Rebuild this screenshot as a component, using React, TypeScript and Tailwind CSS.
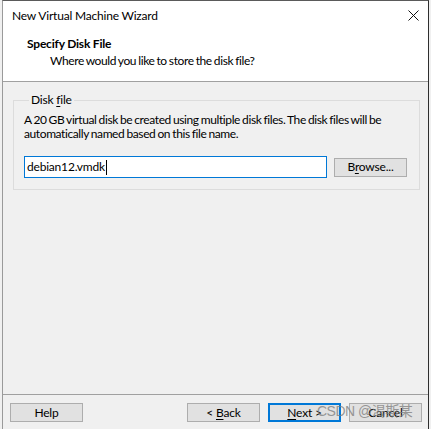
const font = { fontFamily: 'Lato, "Liberation Sans", sans-serif' }

function WinButton({
  label,
  accel,
  rest,
  focused = false,
}: {
  label?: string
  accel?: string
  rest?: string
  focused?: boolean
}) {
  return (
    <button
      className={`flex h-[19px] w-[73px] items-center justify-center bg-[#e1e1e1] text-[12px] leading-none tracking-[-0.2px] text-black ${
        focused ? 'border-2 border-[#0078d7]' : 'border border-[#adadad]'
      }`}
    >
      <span className="whitespace-pre">
        {label}
        {accel && <span className="underline underline-offset-2">{accel}</span>}
        {rest}
      </span>
    </button>
  )
}

export default function App() {
  return (
    <div
      className="relative h-[429px] w-[431px] overflow-hidden bg-[#f0f0f0] tracking-[-0.2px]"
      style={font}
    >
      <div className="ml-[2px] flex h-full w-[427px] flex-col border-l border-r border-t border-l-[#9a9a9a] border-r-[#2e2e2e] border-t-[#5a5a5a] bg-[#f0f0f0]">
        {/* header */}
        <div className="border-b border-[#a0a0a0] bg-white">
          <div className="flex h-[29px] items-center justify-between pl-[9px] pr-[9px]">
            <span className="text-[12px] text-black">New Virtual Machine Wizard</span>
            <svg width="11" height="11" viewBox="0 0 11 11" className="mt-[-1px]">
              <path d="M0.5 0.5L10.5 10.5M10.5 0.5L0.5 10.5" stroke="#111" strokeWidth="1" />
            </svg>
          </div>
          <div className="pb-[12px] pl-[24px] pt-[6px]">
            <div className="text-[12px] font-bold leading-[16px] text-black">Specify Disk File</div>
            <div className="mt-[1px] pl-[23px] text-[12px] leading-[16px] tracking-[-0.4px] text-black [word-spacing:-0.6px]">
              Where would you like to store the disk file?
            </div>
          </div>
        </div>

        {/* body */}
        <div className="flex-1 pl-[10px] pr-[8px] pt-[10px]">
          <fieldset className="border border-[#dcdcdc] pb-[11px] pl-[10px] pr-[10px]">
            <legend className="ml-[5px] px-[2px] text-[12px] leading-[16px] text-black">
              Disk <span className="underline underline-offset-2">f</span>ile
            </legend>
            <p className="pt-[5px] text-[12px] leading-[14px] tracking-[-0.4px] text-black [word-spacing:-0.6px]">
              A 20 GB virtual disk be created using multiple disk files. The disk files will be
              <br />
              automatically named based on this file name.
            </p>
            <div className="mt-[15px] flex items-center gap-[7px]">
              <div className="flex h-[22px] w-[303px] items-center border border-[#0078d7] bg-white pl-[2px] text-[12px] text-black">
                debian12.vmdk
                <span className="ml-px h-[15px] w-px bg-black" />
              </div>
              <WinButton label="B" accel="r" rest="owse..." />
            </div>
          </fieldset>
        </div>

        {/* footer */}
        <div className="flex h-[35px] border-t border-[#a0a0a0] pl-[7px] pt-[8px]">
          <WinButton label="Help" />
          <div className="ml-[104px] flex gap-[8px]">
            <WinButton label="< " accel="B" rest="ack" />
            <WinButton accel="N" rest="ext >" focused />
            <WinButton label="Cancel" />
          </div>
        </div>
      </div>

      {/* watermark */}
      <div
        className="pointer-events-none absolute left-[317px] top-[401px] text-[14px] tracking-[-0.5px] text-[#808080]/80"
        style={{ fontFamily: '"Liberation Sans", "Noto Sans CJK SC", sans-serif' }}
      >
        CSDN @渴斯某
      </div>
    </div>
  )
}
